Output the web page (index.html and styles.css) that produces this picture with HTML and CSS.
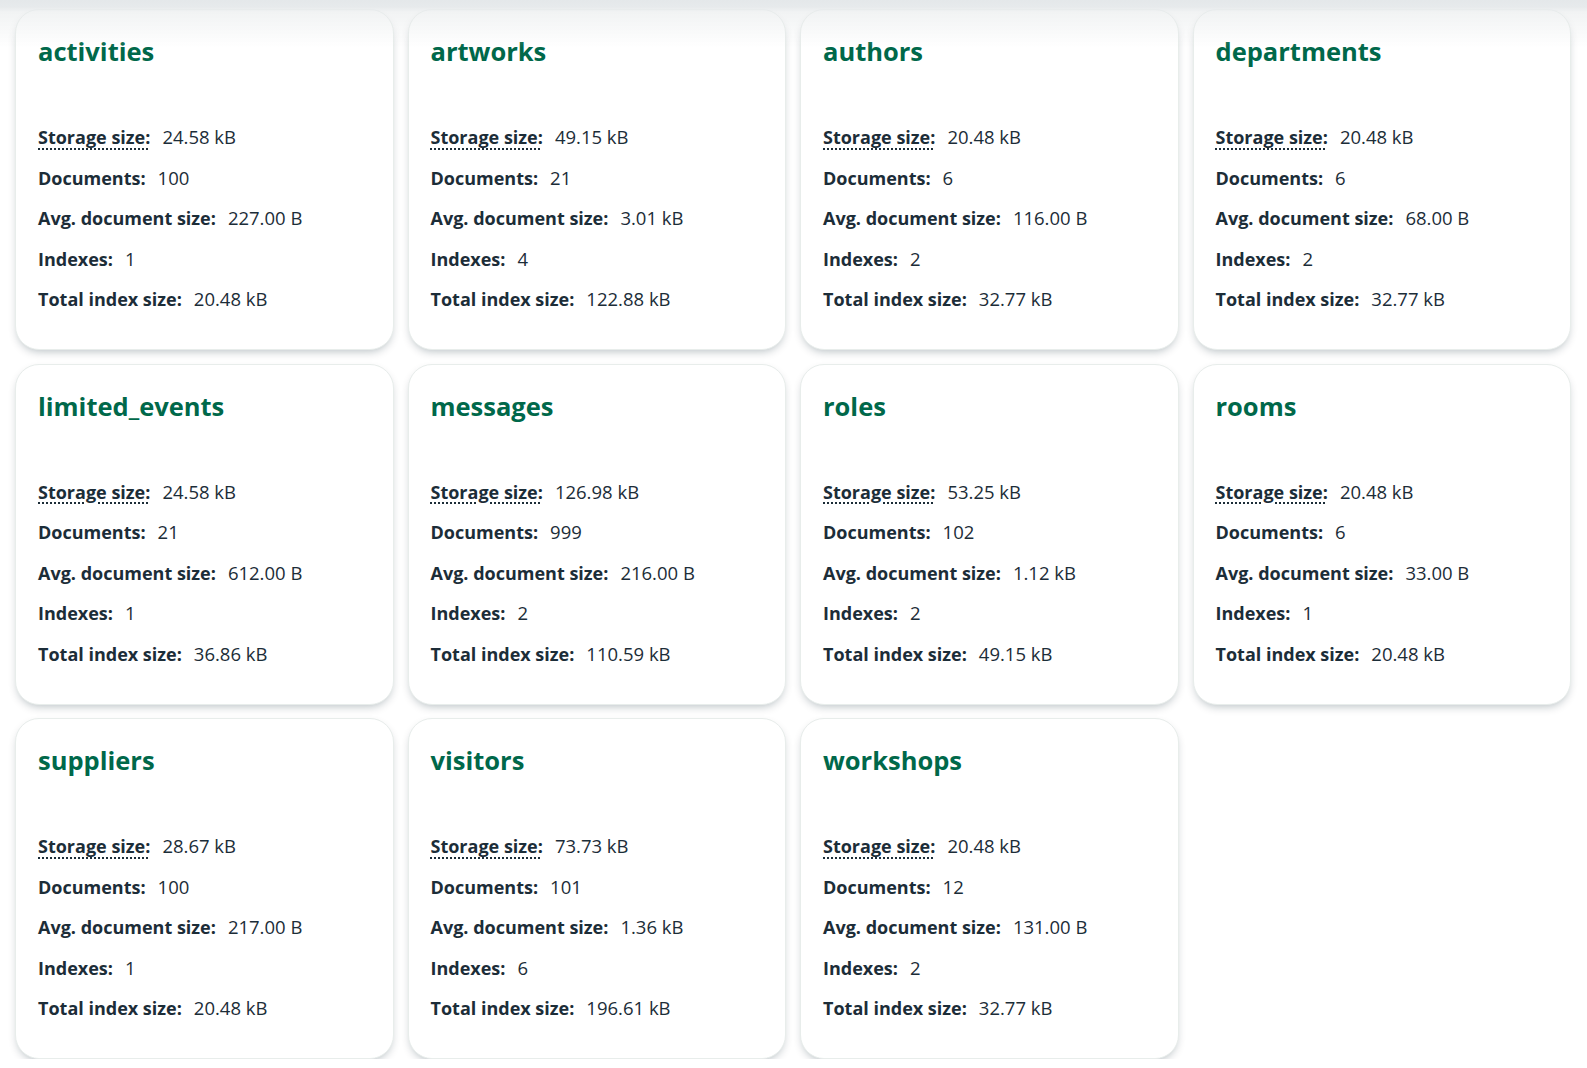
FILE: index.html
```html
<!DOCTYPE html>
<html lang="en">
<head>
<meta charset="utf-8">
<title>Collections</title>
<link rel="stylesheet" href="styles.css">
</head>
<body>
<div class="top-shade"></div>
<main class="grid">
  <section class="card">
    <h2 class="title">activities</h2>
    <dl class="stats">
      <div class="row"><dt class="label hint">Storage size:</dt><dd class="value">24.58 kB</dd></div>
      <div class="row"><dt class="label">Documents:</dt><dd class="value">100</dd></div>
      <div class="row"><dt class="label">Avg. document size:</dt><dd class="value">227.00 B</dd></div>
      <div class="row"><dt class="label">Indexes:</dt><dd class="value">1</dd></div>
      <div class="row"><dt class="label">Total index size:</dt><dd class="value">20.48 kB</dd></div>
    </dl>
  </section>
  <section class="card">
    <h2 class="title">artworks</h2>
    <dl class="stats">
      <div class="row"><dt class="label hint">Storage size:</dt><dd class="value">49.15 kB</dd></div>
      <div class="row"><dt class="label">Documents:</dt><dd class="value">21</dd></div>
      <div class="row"><dt class="label">Avg. document size:</dt><dd class="value">3.01 kB</dd></div>
      <div class="row"><dt class="label">Indexes:</dt><dd class="value">4</dd></div>
      <div class="row"><dt class="label">Total index size:</dt><dd class="value">122.88 kB</dd></div>
    </dl>
  </section>
  <section class="card">
    <h2 class="title">authors</h2>
    <dl class="stats">
      <div class="row"><dt class="label hint">Storage size:</dt><dd class="value">20.48 kB</dd></div>
      <div class="row"><dt class="label">Documents:</dt><dd class="value">6</dd></div>
      <div class="row"><dt class="label">Avg. document size:</dt><dd class="value">116.00 B</dd></div>
      <div class="row"><dt class="label">Indexes:</dt><dd class="value">2</dd></div>
      <div class="row"><dt class="label">Total index size:</dt><dd class="value">32.77 kB</dd></div>
    </dl>
  </section>
  <section class="card">
    <h2 class="title">departments</h2>
    <dl class="stats">
      <div class="row"><dt class="label hint">Storage size:</dt><dd class="value">20.48 kB</dd></div>
      <div class="row"><dt class="label">Documents:</dt><dd class="value">6</dd></div>
      <div class="row"><dt class="label">Avg. document size:</dt><dd class="value">68.00 B</dd></div>
      <div class="row"><dt class="label">Indexes:</dt><dd class="value">2</dd></div>
      <div class="row"><dt class="label">Total index size:</dt><dd class="value">32.77 kB</dd></div>
    </dl>
  </section>
  <section class="card">
    <h2 class="title">limited_events</h2>
    <dl class="stats">
      <div class="row"><dt class="label hint">Storage size:</dt><dd class="value">24.58 kB</dd></div>
      <div class="row"><dt class="label">Documents:</dt><dd class="value">21</dd></div>
      <div class="row"><dt class="label">Avg. document size:</dt><dd class="value">612.00 B</dd></div>
      <div class="row"><dt class="label">Indexes:</dt><dd class="value">1</dd></div>
      <div class="row"><dt class="label">Total index size:</dt><dd class="value">36.86 kB</dd></div>
    </dl>
  </section>
  <section class="card">
    <h2 class="title">messages</h2>
    <dl class="stats">
      <div class="row"><dt class="label hint">Storage size:</dt><dd class="value">126.98 kB</dd></div>
      <div class="row"><dt class="label">Documents:</dt><dd class="value">999</dd></div>
      <div class="row"><dt class="label">Avg. document size:</dt><dd class="value">216.00 B</dd></div>
      <div class="row"><dt class="label">Indexes:</dt><dd class="value">2</dd></div>
      <div class="row"><dt class="label">Total index size:</dt><dd class="value">110.59 kB</dd></div>
    </dl>
  </section>
  <section class="card">
    <h2 class="title">roles</h2>
    <dl class="stats">
      <div class="row"><dt class="label hint">Storage size:</dt><dd class="value">53.25 kB</dd></div>
      <div class="row"><dt class="label">Documents:</dt><dd class="value">102</dd></div>
      <div class="row"><dt class="label">Avg. document size:</dt><dd class="value">1.12 kB</dd></div>
      <div class="row"><dt class="label">Indexes:</dt><dd class="value">2</dd></div>
      <div class="row"><dt class="label">Total index size:</dt><dd class="value">49.15 kB</dd></div>
    </dl>
  </section>
  <section class="card">
    <h2 class="title">rooms</h2>
    <dl class="stats">
      <div class="row"><dt class="label hint">Storage size:</dt><dd class="value">20.48 kB</dd></div>
      <div class="row"><dt class="label">Documents:</dt><dd class="value">6</dd></div>
      <div class="row"><dt class="label">Avg. document size:</dt><dd class="value">33.00 B</dd></div>
      <div class="row"><dt class="label">Indexes:</dt><dd class="value">1</dd></div>
      <div class="row"><dt class="label">Total index size:</dt><dd class="value">20.48 kB</dd></div>
    </dl>
  </section>
  <section class="card">
    <h2 class="title">suppliers</h2>
    <dl class="stats">
      <div class="row"><dt class="label hint">Storage size:</dt><dd class="value">28.67 kB</dd></div>
      <div class="row"><dt class="label">Documents:</dt><dd class="value">100</dd></div>
      <div class="row"><dt class="label">Avg. document size:</dt><dd class="value">217.00 B</dd></div>
      <div class="row"><dt class="label">Indexes:</dt><dd class="value">1</dd></div>
      <div class="row"><dt class="label">Total index size:</dt><dd class="value">20.48 kB</dd></div>
    </dl>
  </section>
  <section class="card">
    <h2 class="title">visitors</h2>
    <dl class="stats">
      <div class="row"><dt class="label hint">Storage size:</dt><dd class="value">73.73 kB</dd></div>
      <div class="row"><dt class="label">Documents:</dt><dd class="value">101</dd></div>
      <div class="row"><dt class="label">Avg. document size:</dt><dd class="value">1.36 kB</dd></div>
      <div class="row"><dt class="label">Indexes:</dt><dd class="value">6</dd></div>
      <div class="row"><dt class="label">Total index size:</dt><dd class="value">196.61 kB</dd></div>
    </dl>
  </section>
  <section class="card">
    <h2 class="title">workshops</h2>
    <dl class="stats">
      <div class="row"><dt class="label hint">Storage size:</dt><dd class="value">20.48 kB</dd></div>
      <div class="row"><dt class="label">Documents:</dt><dd class="value">12</dd></div>
      <div class="row"><dt class="label">Avg. document size:</dt><dd class="value">131.00 B</dd></div>
      <div class="row"><dt class="label">Indexes:</dt><dd class="value">2</dd></div>
      <div class="row"><dt class="label">Total index size:</dt><dd class="value">32.77 kB</dd></div>
    </dl>
  </section>
</main>
</body>
</html>
```

FILE: styles.css
```css
html, body {
  margin: 0;
  padding: 0;
  background: #ffffff;
}

body {
  font-family: "Open Sans", "Noto Sans", sans-serif;
  color: #1c2d38;
  overflow: hidden;
}

.top-shade {
  position: fixed;
  top: 0;
  left: 0;
  right: 0;
  height: 48px;
  background: linear-gradient(to bottom, #e4e8ea 0px, #e7eaec 7px, rgba(232, 235, 236, 0.6) 12px, rgba(255, 255, 255, 0) 48px);
  pointer-events: none;
  z-index: 5;
}

.grid {
  display: grid;
  grid-template-columns: repeat(4, 1fr);
  column-gap: 14px;
  row-gap: 13.5px;
  padding: 9px 16px 0 15px;
}

.card {
  box-sizing: border-box;
  height: 341px;
  background: #ffffff;
  border: 1px solid #e8edeb;
  border-radius: 24px;
  box-shadow: 0 4px 10px -3px rgba(0, 30, 43, 0.3);
  padding: 25px 22px 0 22px;
}

.title {
  margin: 0;
  font-size: 25.5px;
  line-height: 32px;
  font-weight: 700;
  color: #00684a;
  letter-spacing: 0;
}

.stats {
  margin: 58px 0 0 0;
}

.row {
  display: flex;
  align-items: baseline;
  height: 40.5px;
}

.label {
  font-size: 18px;
  font-weight: 700;
  line-height: 24px;
  color: #1c2d38;
}

.hint {
  text-decoration: underline dotted 2px #1c2d38;
  text-underline-offset: 4px;
}

.value {
  margin: 0 0 0 12px;
  font-size: 18.5px;
  line-height: 24px;
  font-weight: 400;
  color: #1c2d38;
}
```
